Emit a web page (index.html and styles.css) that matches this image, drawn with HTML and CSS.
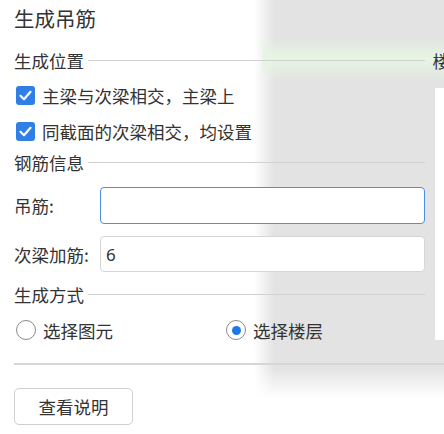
FILE: index.html
```html
<!DOCTYPE html>
<html lang="zh-CN">
<head>
<meta charset="utf-8">
<title>生成吊筋</title>
<link rel="stylesheet" href="styles.css">
</head>
<body>
<div class="dialog">
  <div class="title">生成吊筋</div>

  <div class="group-head group-head-wide">
    <span class="group-name">生成位置</span>
    <span class="group-line"></span>
    <span class="group-next">楼</span>
  </div>
  <label class="check-row">
    <span class="checkbox"><svg viewBox="0 0 19 19" width="19" height="19"><polyline points="4.5,9.8 8,13.2 14.5,5.8" fill="none" stroke="#fff" stroke-width="2.2" stroke-linecap="round" stroke-linejoin="round"/></svg></span>
    <span class="row-text">主梁与次梁相交，主梁上</span>
  </label>
  <label class="check-row">
    <span class="checkbox"><svg viewBox="0 0 19 19" width="19" height="19"><polyline points="4.5,9.8 8,13.2 14.5,5.8" fill="none" stroke="#fff" stroke-width="2.2" stroke-linecap="round" stroke-linejoin="round"/></svg></span>
    <span class="row-text">同截面的次梁相交，均设置</span>
  </label>

  <div class="group-head group-head-2">
    <span class="group-name">钢筋信息</span>
    <span class="group-line"></span>
  </div>
  <div class="field-row field-row-1">
    <span class="field-label">吊筋:</span>
    <span class="field-input field-input-focus"></span>
  </div>
  <div class="field-row field-row-2">
    <span class="field-label">次梁加筋:</span>
    <span class="field-input"><span class="field-value">6</span></span>
  </div>

  <div class="group-head group-head-3">
    <span class="group-name">生成方式</span>
    <span class="group-line"></span>
  </div>
  <div class="radio-row">
    <label class="radio-item radio-first">
      <span class="radio"></span>
      <span class="row-text">选择图元</span>
    </label>
    <label class="radio-item">
      <span class="radio radio-on"><span class="radio-dot"></span></span>
      <span class="row-text">选择楼层</span>
    </label>
  </div>

  <div class="separator"></div>

  <div class="actions">
    <button class="btn" type="button">查看说明</button>
  </div>
</div>
</body>
</html>
```

FILE: styles.css
```css
html, body {
  margin: 0;
  padding: 0;
}

body {
  width: 444px;
  height: 434px;
  overflow: hidden;
  font-family: "Noto Sans CJK SC", "Noto Sans", sans-serif;
  color: #333;
  background:
    linear-gradient(#fff, #fff) 435px 88px / 9px 252px no-repeat,
    linear-gradient(to bottom, rgba(255,255,255,0) 368px, #fff 398px) 0 0 / 100% 100% no-repeat,
    linear-gradient(to bottom, rgba(230,246,226,0) 38px, rgba(230,246,226,1) 58px, rgba(230,246,226,0) 82px) 262px 0 / 182px 100% no-repeat,
    linear-gradient(to right, #fff 0, #fff 254px, #e3e3e3 274px, #e3e3e3 100%);
}

.dialog {
  padding: 0 19px 0 14px;
  display: flex;
  flex-direction: column;
}

.title {
  height: 36px;
  line-height: 36px;
  font-size: 20.5px;
  color: #333;
}

.group-head {
  display: flex;
  align-items: center;
  height: 24px;
  font-size: 17.5px;
  line-height: 24px;
}

.group-head-wide {
  margin-top: 13px;
  margin-right: -25px;
}

.group-head-2 {
  margin-top: 2px;
}

.group-head-3 {
  margin-top: 11px;
}

.group-name {
  flex: none;
}

.group-line {
  flex: 1;
  height: 1px;
  background: #d2d2d2;
  margin-left: 4px;
  margin-top: -1px;
}

.group-next {
  flex: none;
  margin-left: 8px;
}

.check-row {
  display: flex;
  align-items: center;
  height: 36px;
  padding-left: 2px;
  font-size: 17.5px;
}

.group-head-wide + .check-row {
  margin-top: 4px;
}

.checkbox {
  width: 19px;
  height: 19px;
  border-radius: 3px;
  background: #2f7fe6;
  display: flex;
  flex: none;
}

.row-text {
  margin-left: 7px;
  white-space: nowrap;
}

.field-row {
  display: flex;
  align-items: center;
  font-size: 17.5px;
}

.field-row-1 {
  margin-top: 12px;
  height: 37px;
}

.field-row-2 {
  margin-top: 12px;
  height: 36px;
}

.field-label {
  width: 86px;
  flex: none;
  white-space: nowrap;
}

.field-input {
  flex: 1;
  align-self: stretch;
  box-sizing: border-box;
  border: 1px solid #d6d6d6;
  border-radius: 4px;
  background: #fff;
  display: flex;
  align-items: center;
  padding-left: 5px;
}

.field-input-focus {
  border: 1.5px solid #4a8fe3;
}

.field-value {
  font-family: "Noto Sans", "Open Sans", sans-serif;
  font-size: 17px;
  color: #333;
}

.radio-row {
  display: flex;
  align-items: center;
  height: 36px;
  margin-top: 5px;
  padding-left: 2px;
  font-size: 17.5px;
}

.radio-item {
  display: flex;
  align-items: center;
}

.radio-first {
  flex: 0 0 210px;
}

.radio {
  box-sizing: border-box;
  width: 20px;
  height: 20px;
  border: 1.5px solid #8a8a8a;
  border-radius: 50%;
  background: #fff;
  display: flex;
  align-items: center;
  justify-content: center;
  flex: none;
}

.radio-dot {
  width: 9px;
  height: 9px;
  border-radius: 50%;
  background: #1f78e6;
}

.separator {
  margin-top: 15px;
  margin-right: -19px;
  height: 1.5px;
  background: #d6d6d6;
}

.actions {
  margin-top: 23px;
  display: flex;
}

.btn {
  width: 119px;
  height: 37px;
  box-sizing: border-box;
  border: 1px solid #cfcfcf;
  border-radius: 5px;
  background: #fff;
  font-family: "Noto Sans CJK SC", "Noto Sans", sans-serif;
  font-size: 17.5px;
  color: #333;
  padding: 0;
}
```
